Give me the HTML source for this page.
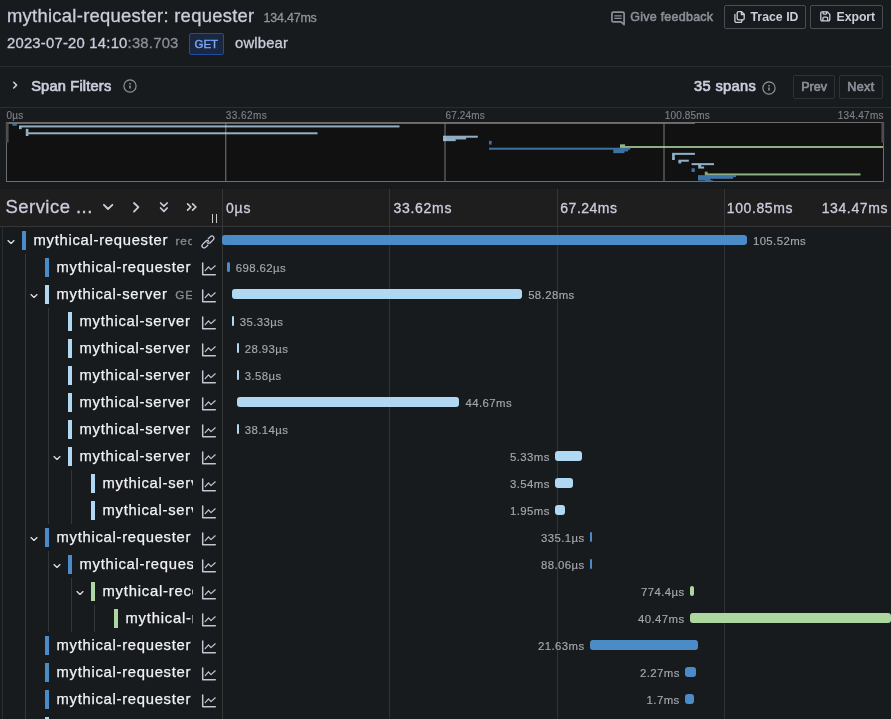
<!DOCTYPE html>
<html lang="en"><head><meta charset="utf-8"><title>mythical-requester: requester</title>
<style>
html,body{margin:0;padding:0}
body{width:891px;height:719px;overflow:hidden;position:relative;background:#181b1e;font-family:"Liberation Sans",sans-serif;color:#ccccdc}
#root{position:absolute;left:0;top:0;width:891px;height:719px;overflow:hidden;will-change:transform}
#root div,#root span,#root svg{position:absolute;white-space:pre;box-sizing:border-box}
#root span{-webkit-text-stroke:0.3px}
</style></head><body><div id="root">
<div style="left:0px;top:66px;width:891px;height:1px;background:#2a2d32"></div>
<div style="left:0px;top:107px;width:891px;height:1px;background:#2a2d32"></div>
<div style="left:189px;top:33px;width:35px;height:21.5px;background:#1a2740;border:1px solid #1f4c9c;border-radius:2px"></div>
<div style="left:724px;top:5px;width:82px;height:24px;border:1px solid #4a4c54;border-radius:2px"></div>
<div style="left:810px;top:5px;width:73px;height:24px;border:1px solid #4a4c54;border-radius:2px"></div>
<div style="left:793px;top:75px;width:42px;height:23.5px;border:1px solid #2e3136;border-radius:2px"></div>
<div style="left:839px;top:75px;width:44px;height:23.5px;border:1px solid #2e3136;border-radius:2px"></div>
<div style="left:0px;top:189px;width:891px;height:37px;background:#1e1e1f"></div>
<div style="left:0px;top:226px;width:891px;height:1px;background:#363636"></div>
<div style="left:389px;top:189px;width:1px;height:37px;background:#363636"></div>
<div style="left:389px;top:227px;width:1px;height:492px;background:#2f3133"></div>
<div style="left:557px;top:189px;width:1px;height:37px;background:#363636"></div>
<div style="left:557px;top:227px;width:1px;height:492px;background:#2f3133"></div>
<div style="left:724px;top:189px;width:1px;height:37px;background:#363636"></div>
<div style="left:724px;top:227px;width:1px;height:492px;background:#2f3133"></div>
<div style="left:222px;top:189px;width:1px;height:530px;background:#363637"></div>
<div style="left:2px;top:227px;width:1px;height:492px;background:#2a2d31"></div>
<div style="left:212px;top:214px;width:1.2px;height:9px;background:#c8c8cc"></div>
<div style="left:216px;top:214px;width:1.2px;height:9px;background:#c8c8cc"></div>
<svg style="left:611px;top:10.5px;width:14px;height:14.5px;overflow:visible" viewBox="0 0 14 14.5"><g fill="none" stroke="#8e8e98" stroke-width="1.7" stroke-linecap="round" stroke-linejoin="round" ><path d="M2.4 1.2H11.6A1.5 1.5 0 0 1 13.1 2.7V13.6L10 10.9H2.4A1.5 1.5 0 0 1 0.9 9.4V2.7A1.5 1.5 0 0 1 2.4 1.2Z"/><path d="M3.8 4.9H10.2M3.8 7.3H10.2" stroke-width="1.3"/></g></svg>
<svg style="left:733.5px;top:11px;width:11px;height:12px;overflow:visible" viewBox="0 0 11 12"><g fill="none" stroke="#ccccdc" stroke-width="1.3" stroke-linecap="round" stroke-linejoin="round" ><path d="M3.2 2.6V2A1.3 1.3 0 0 1 4.5 0.7H7.6L10.2 3.3V7.6A1.3 1.3 0 0 1 8.9 8.9H8.2"/><path d="M7.4 0.9V3.5H10"/><path d="M3.2 2.9V7.5A1.3 1.3 0 0 0 4.5 8.8H8"/><path d="M0.9 3.4V10A1.3 1.3 0 0 0 2.2 11.3H6.6A1.3 1.3 0 0 0 7.9 10V9.2" /></g></svg>
<svg style="left:819.5px;top:11.2px;width:10.6px;height:10.6px;overflow:visible" viewBox="0 0 10.6 10.6"><g fill="none" stroke="#ccccdc" stroke-width="1.3" stroke-linecap="round" stroke-linejoin="round" ><path d="M2 0.8H7.2L9.8 3.4V8.6A1.2 1.2 0 0 1 8.6 9.8H2A1.2 1.2 0 0 1 0.8 8.6V2A1.2 1.2 0 0 1 2 0.8Z"/><path d="M3.1 1V2.3A0.8 0.8 0 0 0 3.9 3.1H5.9A0.8 0.8 0 0 0 6.7 2.3V1.2"/><path d="M2.9 9.6V7.4A1.3 1.3 0 0 1 4.2 6.1H6.4A1.3 1.3 0 0 1 7.7 7.4V9.6"/></g></svg>
<svg style="left:12px;top:80px;width:6px;height:10px;overflow:visible" viewBox="0 0 6 10"><g fill="none" stroke="#ccccdc" stroke-width="1.5" stroke-linecap="round" stroke-linejoin="round" stroke-linecap="square"><path d="M1.7 2.2L4.6 5.1L1.7 8"/></g></svg>
<svg style="left:123px;top:79px;width:14px;height:14px;overflow:visible" viewBox="0 0 14 14"><g fill="none" stroke="#94949b" stroke-width="1.15" stroke-linecap="round" stroke-linejoin="round" ><circle cx="7" cy="7" r="6.1"/><path d="M7 6.6V9.6" stroke-width="1.5" stroke-linecap="butt"/><path d="M7 4.1V5.4" stroke-width="1.5" stroke-linecap="butt"/></g></svg>
<svg style="left:762px;top:80.7px;width:14px;height:14px;overflow:visible" viewBox="0 0 14 14"><g fill="none" stroke="#94949b" stroke-width="1.15" stroke-linecap="round" stroke-linejoin="round" ><circle cx="7" cy="7" r="6.1"/><path d="M7 6.6V9.6" stroke-width="1.5" stroke-linecap="butt"/><path d="M7 4.1V5.4" stroke-width="1.5" stroke-linecap="butt"/></g></svg>
<svg style="left:102px;top:202px;width:12px;height:10px;overflow:visible" viewBox="0 0 12 10"><g fill="none" stroke="#ccccdc" stroke-width="1.8" stroke-linecap="round" stroke-linejoin="round" ><path d="M1.9 2.8L6 7L10.4 2.8"/></g></svg>
<svg style="left:131px;top:201px;width:10px;height:12px;overflow:visible" viewBox="0 0 10 12"><g fill="none" stroke="#ccccdc" stroke-width="1.8" stroke-linecap="round" stroke-linejoin="round" ><path d="M3 2L7.4 6.2L3 10.6"/></g></svg>
<svg style="left:159px;top:201px;width:10px;height:12px;overflow:visible" viewBox="0 0 10 12"><g fill="none" stroke="#ccccdc" stroke-width="1.7" stroke-linecap="round" stroke-linejoin="round" ><path d="M1.6 2L4.9 5.1L8.2 2M1.6 7L4.9 10.3L8.2 7"/></g></svg>
<svg style="left:186px;top:202px;width:12px;height:10px;overflow:visible" viewBox="0 0 12 10"><g fill="none" stroke="#ccccdc" stroke-width="1.7" stroke-linecap="round" stroke-linejoin="round" ><path d="M1.6 1.9L4.8 5L1.6 8.2M6.6 1.9L9.9 5L6.6 8.2"/></g></svg>
<svg viewBox="0 0 8 8" style="left:7.199999999999999px;top:237.5px;width:8px;height:8px;overflow:visible"><path d="M1 2.6 L4 5.4 L7 2.6" fill="none" stroke="#e0e0e8" stroke-width="1.3" stroke-linecap="round" stroke-linejoin="round"/></svg>
<div style="left:22px;top:231px;width:4px;height:19px;background:#4a8bc8;"></div>
<svg viewBox="0 0 14 14" style="left:201px;top:235px;width:14px;height:14px;overflow:visible"><g fill="none" stroke="#ccccdc" stroke-width="1.3" stroke-linecap="round" transform="rotate(-45 7 7)"><path d="M4.6 9.1H1.5A2.1 2.1 0 0 1 1.5 4.9H5.9A2.1 2.1 0 0 1 8 7"/><path d="M9.4 4.9H12.5A2.1 2.1 0 0 1 12.5 9.1H8.1A2.1 2.1 0 0 1 6 7"/></g></svg>
<div style="left:222px;top:235px;width:525px;height:10px;background:#4a8bc8;border-radius:3px"></div>
<div style="left:25px;top:254px;width:1px;height:27px;background:#33363b;"></div>
<div style="left:45px;top:258px;width:4px;height:19px;background:#4a8bc8;"></div>
<svg viewBox="0 0 14 14" style="left:202px;top:262.2px;width:14px;height:14px;overflow:visible"><g fill="none" stroke="#c4c4d2" stroke-linecap="round" stroke-linejoin="round"><path d="M0.7 0.9V12.8H13.3" stroke-width="1.5"/><path d="M3.2 8.6 L6.5 4.8 L9 7.6 L13.2 3.8" stroke-width="1.2"/></g></svg>
<div style="left:227px;top:262px;width:2.5px;height:10px;background:#4a8bc8;border-radius:3px"></div>
<div style="left:25px;top:281px;width:1px;height:27px;background:#33363b;"></div>
<svg viewBox="0 0 8 8" style="left:30.2px;top:291.5px;width:8px;height:8px;overflow:visible"><path d="M1 2.6 L4 5.4 L7 2.6" fill="none" stroke="#e0e0e8" stroke-width="1.3" stroke-linecap="round" stroke-linejoin="round"/></svg>
<div style="left:45px;top:285px;width:4px;height:19px;background:#b1d8f2;"></div>
<svg viewBox="0 0 14 14" style="left:202px;top:289.2px;width:14px;height:14px;overflow:visible"><g fill="none" stroke="#c4c4d2" stroke-linecap="round" stroke-linejoin="round"><path d="M0.7 0.9V12.8H13.3" stroke-width="1.5"/><path d="M3.2 8.6 L6.5 4.8 L9 7.6 L13.2 3.8" stroke-width="1.2"/></g></svg>
<div style="left:232px;top:289px;width:290px;height:10px;background:#b1d8f2;border-radius:3px"></div>
<div style="left:25px;top:308px;width:1px;height:27px;background:#33363b;"></div>
<div style="left:48px;top:308px;width:1px;height:27px;background:#33363b;"></div>
<div style="left:68px;top:312px;width:4px;height:19px;background:#b1d8f2;"></div>
<svg viewBox="0 0 14 14" style="left:202px;top:316.2px;width:14px;height:14px;overflow:visible"><g fill="none" stroke="#c4c4d2" stroke-linecap="round" stroke-linejoin="round"><path d="M0.7 0.9V12.8H13.3" stroke-width="1.5"/><path d="M3.2 8.6 L6.5 4.8 L9 7.6 L13.2 3.8" stroke-width="1.2"/></g></svg>
<div style="left:232px;top:316px;width:1.5px;height:10px;background:#b1d8f2;border-radius:3px"></div>
<div style="left:25px;top:335px;width:1px;height:27px;background:#33363b;"></div>
<div style="left:48px;top:335px;width:1px;height:27px;background:#33363b;"></div>
<div style="left:68px;top:339px;width:4px;height:19px;background:#b1d8f2;"></div>
<svg viewBox="0 0 14 14" style="left:202px;top:343.2px;width:14px;height:14px;overflow:visible"><g fill="none" stroke="#c4c4d2" stroke-linecap="round" stroke-linejoin="round"><path d="M0.7 0.9V12.8H13.3" stroke-width="1.5"/><path d="M3.2 8.6 L6.5 4.8 L9 7.6 L13.2 3.8" stroke-width="1.2"/></g></svg>
<div style="left:237px;top:343px;width:1.5px;height:10px;background:#b1d8f2;border-radius:3px"></div>
<div style="left:25px;top:362px;width:1px;height:27px;background:#33363b;"></div>
<div style="left:48px;top:362px;width:1px;height:27px;background:#33363b;"></div>
<div style="left:68px;top:366px;width:4px;height:19px;background:#b1d8f2;"></div>
<svg viewBox="0 0 14 14" style="left:202px;top:370.2px;width:14px;height:14px;overflow:visible"><g fill="none" stroke="#c4c4d2" stroke-linecap="round" stroke-linejoin="round"><path d="M0.7 0.9V12.8H13.3" stroke-width="1.5"/><path d="M3.2 8.6 L6.5 4.8 L9 7.6 L13.2 3.8" stroke-width="1.2"/></g></svg>
<div style="left:237px;top:370px;width:1.5px;height:10px;background:#b1d8f2;border-radius:3px"></div>
<div style="left:25px;top:389px;width:1px;height:27px;background:#33363b;"></div>
<div style="left:48px;top:389px;width:1px;height:27px;background:#33363b;"></div>
<div style="left:68px;top:393px;width:4px;height:19px;background:#b1d8f2;"></div>
<svg viewBox="0 0 14 14" style="left:202px;top:397.2px;width:14px;height:14px;overflow:visible"><g fill="none" stroke="#c4c4d2" stroke-linecap="round" stroke-linejoin="round"><path d="M0.7 0.9V12.8H13.3" stroke-width="1.5"/><path d="M3.2 8.6 L6.5 4.8 L9 7.6 L13.2 3.8" stroke-width="1.2"/></g></svg>
<div style="left:237px;top:397px;width:222px;height:10px;background:#b1d8f2;border-radius:3px"></div>
<div style="left:25px;top:416px;width:1px;height:27px;background:#33363b;"></div>
<div style="left:48px;top:416px;width:1px;height:27px;background:#33363b;"></div>
<div style="left:68px;top:420px;width:4px;height:19px;background:#b1d8f2;"></div>
<svg viewBox="0 0 14 14" style="left:202px;top:424.2px;width:14px;height:14px;overflow:visible"><g fill="none" stroke="#c4c4d2" stroke-linecap="round" stroke-linejoin="round"><path d="M0.7 0.9V12.8H13.3" stroke-width="1.5"/><path d="M3.2 8.6 L6.5 4.8 L9 7.6 L13.2 3.8" stroke-width="1.2"/></g></svg>
<div style="left:237px;top:424px;width:1.5px;height:10px;background:#b1d8f2;border-radius:3px"></div>
<div style="left:25px;top:443px;width:1px;height:27px;background:#33363b;"></div>
<div style="left:48px;top:443px;width:1px;height:27px;background:#33363b;"></div>
<svg viewBox="0 0 8 8" style="left:53.2px;top:453.5px;width:8px;height:8px;overflow:visible"><path d="M1 2.6 L4 5.4 L7 2.6" fill="none" stroke="#e0e0e8" stroke-width="1.3" stroke-linecap="round" stroke-linejoin="round"/></svg>
<div style="left:68px;top:447px;width:4px;height:19px;background:#b1d8f2;"></div>
<svg viewBox="0 0 14 14" style="left:202px;top:451.2px;width:14px;height:14px;overflow:visible"><g fill="none" stroke="#c4c4d2" stroke-linecap="round" stroke-linejoin="round"><path d="M0.7 0.9V12.8H13.3" stroke-width="1.5"/><path d="M3.2 8.6 L6.5 4.8 L9 7.6 L13.2 3.8" stroke-width="1.2"/></g></svg>
<div style="left:555px;top:451px;width:27px;height:10px;background:#b1d8f2;border-radius:3px"></div>
<div style="left:25px;top:470px;width:1px;height:27px;background:#33363b;"></div>
<div style="left:48px;top:470px;width:1px;height:27px;background:#33363b;"></div>
<div style="left:71px;top:470px;width:1px;height:27px;background:#33363b;"></div>
<div style="left:91px;top:474px;width:4px;height:19px;background:#b1d8f2;"></div>
<svg viewBox="0 0 14 14" style="left:202px;top:478.2px;width:14px;height:14px;overflow:visible"><g fill="none" stroke="#c4c4d2" stroke-linecap="round" stroke-linejoin="round"><path d="M0.7 0.9V12.8H13.3" stroke-width="1.5"/><path d="M3.2 8.6 L6.5 4.8 L9 7.6 L13.2 3.8" stroke-width="1.2"/></g></svg>
<div style="left:555px;top:478px;width:18px;height:10px;background:#b1d8f2;border-radius:3px"></div>
<div style="left:25px;top:497px;width:1px;height:27px;background:#33363b;"></div>
<div style="left:48px;top:497px;width:1px;height:27px;background:#33363b;"></div>
<div style="left:71px;top:497px;width:1px;height:27px;background:#33363b;"></div>
<div style="left:91px;top:501px;width:4px;height:19px;background:#b1d8f2;"></div>
<svg viewBox="0 0 14 14" style="left:202px;top:505.2px;width:14px;height:14px;overflow:visible"><g fill="none" stroke="#c4c4d2" stroke-linecap="round" stroke-linejoin="round"><path d="M0.7 0.9V12.8H13.3" stroke-width="1.5"/><path d="M3.2 8.6 L6.5 4.8 L9 7.6 L13.2 3.8" stroke-width="1.2"/></g></svg>
<div style="left:555px;top:505px;width:10px;height:10px;background:#b1d8f2;border-radius:3px"></div>
<div style="left:25px;top:524px;width:1px;height:27px;background:#33363b;"></div>
<svg viewBox="0 0 8 8" style="left:30.2px;top:534.5px;width:8px;height:8px;overflow:visible"><path d="M1 2.6 L4 5.4 L7 2.6" fill="none" stroke="#e0e0e8" stroke-width="1.3" stroke-linecap="round" stroke-linejoin="round"/></svg>
<div style="left:45px;top:528px;width:4px;height:19px;background:#4a8bc8;"></div>
<svg viewBox="0 0 14 14" style="left:202px;top:532.2px;width:14px;height:14px;overflow:visible"><g fill="none" stroke="#c4c4d2" stroke-linecap="round" stroke-linejoin="round"><path d="M0.7 0.9V12.8H13.3" stroke-width="1.5"/><path d="M3.2 8.6 L6.5 4.8 L9 7.6 L13.2 3.8" stroke-width="1.2"/></g></svg>
<div style="left:590px;top:532px;width:2px;height:10px;background:#4a8bc8;border-radius:3px"></div>
<div style="left:25px;top:551px;width:1px;height:27px;background:#33363b;"></div>
<div style="left:48px;top:551px;width:1px;height:27px;background:#33363b;"></div>
<svg viewBox="0 0 8 8" style="left:53.2px;top:561.5px;width:8px;height:8px;overflow:visible"><path d="M1 2.6 L4 5.4 L7 2.6" fill="none" stroke="#e0e0e8" stroke-width="1.3" stroke-linecap="round" stroke-linejoin="round"/></svg>
<div style="left:68px;top:555px;width:4px;height:19px;background:#4a8bc8;"></div>
<svg viewBox="0 0 14 14" style="left:202px;top:559.2px;width:14px;height:14px;overflow:visible"><g fill="none" stroke="#c4c4d2" stroke-linecap="round" stroke-linejoin="round"><path d="M0.7 0.9V12.8H13.3" stroke-width="1.5"/><path d="M3.2 8.6 L6.5 4.8 L9 7.6 L13.2 3.8" stroke-width="1.2"/></g></svg>
<div style="left:590px;top:559px;width:2px;height:10px;background:#4a8bc8;border-radius:3px"></div>
<div style="left:25px;top:578px;width:1px;height:27px;background:#33363b;"></div>
<div style="left:48px;top:578px;width:1px;height:27px;background:#33363b;"></div>
<div style="left:71px;top:578px;width:1px;height:27px;background:#33363b;"></div>
<svg viewBox="0 0 8 8" style="left:76.2px;top:588.5px;width:8px;height:8px;overflow:visible"><path d="M1 2.6 L4 5.4 L7 2.6" fill="none" stroke="#e0e0e8" stroke-width="1.3" stroke-linecap="round" stroke-linejoin="round"/></svg>
<div style="left:91px;top:582px;width:4px;height:19px;background:#aed6a0;"></div>
<svg viewBox="0 0 14 14" style="left:202px;top:586.2px;width:14px;height:14px;overflow:visible"><g fill="none" stroke="#c4c4d2" stroke-linecap="round" stroke-linejoin="round"><path d="M0.7 0.9V12.8H13.3" stroke-width="1.5"/><path d="M3.2 8.6 L6.5 4.8 L9 7.6 L13.2 3.8" stroke-width="1.2"/></g></svg>
<div style="left:690px;top:586px;width:4px;height:10px;background:#aed6a0;border-radius:3px"></div>
<div style="left:25px;top:605px;width:1px;height:27px;background:#33363b;"></div>
<div style="left:48px;top:605px;width:1px;height:27px;background:#33363b;"></div>
<div style="left:71px;top:605px;width:1px;height:27px;background:#33363b;"></div>
<div style="left:94px;top:605px;width:1px;height:27px;background:#33363b;"></div>
<div style="left:114px;top:609px;width:4px;height:19px;background:#aed6a0;"></div>
<svg viewBox="0 0 14 14" style="left:202px;top:613.2px;width:14px;height:14px;overflow:visible"><g fill="none" stroke="#c4c4d2" stroke-linecap="round" stroke-linejoin="round"><path d="M0.7 0.9V12.8H13.3" stroke-width="1.5"/><path d="M3.2 8.6 L6.5 4.8 L9 7.6 L13.2 3.8" stroke-width="1.2"/></g></svg>
<div style="left:690px;top:613px;width:200.79999999999995px;height:10px;background:#aed6a0;border-radius:3px"></div>
<div style="left:25px;top:632px;width:1px;height:27px;background:#33363b;"></div>
<div style="left:45px;top:636px;width:4px;height:19px;background:#4a8bc8;"></div>
<svg viewBox="0 0 14 14" style="left:202px;top:640.2px;width:14px;height:14px;overflow:visible"><g fill="none" stroke="#c4c4d2" stroke-linecap="round" stroke-linejoin="round"><path d="M0.7 0.9V12.8H13.3" stroke-width="1.5"/><path d="M3.2 8.6 L6.5 4.8 L9 7.6 L13.2 3.8" stroke-width="1.2"/></g></svg>
<div style="left:590px;top:640px;width:108px;height:10px;background:#4a8bc8;border-radius:3px"></div>
<div style="left:25px;top:659px;width:1px;height:27px;background:#33363b;"></div>
<div style="left:45px;top:663px;width:4px;height:19px;background:#4a8bc8;"></div>
<svg viewBox="0 0 14 14" style="left:202px;top:667.2px;width:14px;height:14px;overflow:visible"><g fill="none" stroke="#c4c4d2" stroke-linecap="round" stroke-linejoin="round"><path d="M0.7 0.9V12.8H13.3" stroke-width="1.5"/><path d="M3.2 8.6 L6.5 4.8 L9 7.6 L13.2 3.8" stroke-width="1.2"/></g></svg>
<div style="left:685px;top:667px;width:11px;height:10px;background:#4a8bc8;border-radius:3px"></div>
<div style="left:25px;top:686px;width:1px;height:27px;background:#33363b;"></div>
<div style="left:45px;top:690px;width:4px;height:19px;background:#4a8bc8;"></div>
<svg viewBox="0 0 14 14" style="left:202px;top:694.2px;width:14px;height:14px;overflow:visible"><g fill="none" stroke="#c4c4d2" stroke-linecap="round" stroke-linejoin="round"><path d="M0.7 0.9V12.8H13.3" stroke-width="1.5"/><path d="M3.2 8.6 L6.5 4.8 L9 7.6 L13.2 3.8" stroke-width="1.2"/></g></svg>
<div style="left:685px;top:694px;width:9px;height:10px;background:#4a8bc8;border-radius:3px"></div>
<div style="left:25px;top:713px;width:1px;height:27px;background:#33363b;"></div>
<div style="left:45px;top:717px;width:4px;height:19px;background:#b1d8f2;"></div>
<svg viewBox="0 0 14 14" style="left:202px;top:721.2px;width:14px;height:14px;overflow:visible"><g fill="none" stroke="#c4c4d2" stroke-linecap="round" stroke-linejoin="round"><path d="M0.7 0.9V12.8H13.3" stroke-width="1.5"/><path d="M3.2 8.6 L6.5 4.8 L9 7.6 L13.2 3.8" stroke-width="1.2"/></g></svg>
<svg style="left:6px;top:122px;width:878px;height:60px;overflow:visible" viewBox="0 0 878 60"><rect x="0.0" y="0.00" width="878.0" height="60.00" fill="#111112"/><rect x="219.0" y="0.00" width="1.4" height="60.00" fill="#5c5c5c"/><rect x="438.3" y="0.00" width="1.4" height="60.00" fill="#5c5c5c"/><rect x="657.3" y="0.00" width="1.4" height="60.00" fill="#5c5c5c"/><rect x="0.0" y="0.00" width="689.0" height="2.00" fill="#4a8bc8" fill-opacity="0.8"/><rect x="6.3" y="1.71" width="4.6" height="2.00" fill="#4a8bc8" fill-opacity="0.8"/><rect x="13.0" y="3.43" width="380.5" height="2.00" fill="#b1d8f2" fill-opacity="0.8"/><rect x="13.0" y="5.14" width="2.6" height="2.00" fill="#b1d8f2" fill-opacity="0.8"/><rect x="19.8" y="6.86" width="2.6" height="2.00" fill="#b1d8f2" fill-opacity="0.8"/><rect x="19.8" y="8.57" width="2.6" height="2.00" fill="#b1d8f2" fill-opacity="0.8"/><rect x="19.8" y="10.29" width="291.7" height="2.00" fill="#b1d8f2" fill-opacity="0.8"/><rect x="19.8" y="12.00" width="2.6" height="2.00" fill="#b1d8f2" fill-opacity="0.8"/><rect x="437.0" y="13.71" width="34.8" height="2.00" fill="#b1d8f2" fill-opacity="0.8"/><rect x="437.0" y="15.43" width="23.1" height="2.00" fill="#b1d8f2" fill-opacity="0.8"/><rect x="437.0" y="17.14" width="12.7" height="2.00" fill="#b1d8f2" fill-opacity="0.8"/><rect x="483.0" y="18.86" width="2.6" height="2.00" fill="#4a8bc8" fill-opacity="0.8"/><rect x="483.0" y="20.57" width="2.6" height="2.00" fill="#4a8bc8" fill-opacity="0.8"/><rect x="614.0" y="22.29" width="5.1" height="2.00" fill="#aed6a0" fill-opacity="0.8"/><rect x="614.0" y="24.00" width="264.0" height="2.00" fill="#aed6a0" fill-opacity="0.8"/><rect x="483.0" y="25.71" width="141.2" height="2.00" fill="#4a8bc8" fill-opacity="0.8"/><rect x="607.3" y="27.43" width="14.8" height="2.00" fill="#4a8bc8" fill-opacity="0.8"/><rect x="607.3" y="29.14" width="11.1" height="2.00" fill="#4a8bc8" fill-opacity="0.8"/><rect x="666.1" y="30.86" width="22.8" height="2.00" fill="#b1d8f2" fill-opacity="0.8"/><rect x="666.1" y="32.57" width="2.7" height="2.00" fill="#b1d8f2" fill-opacity="0.8"/><rect x="666.1" y="34.29" width="2.7" height="2.00" fill="#b1d8f2" fill-opacity="0.8"/><rect x="666.1" y="36.00" width="2.7" height="2.00" fill="#b1d8f2" fill-opacity="0.8"/><rect x="672.4" y="37.71" width="10.4" height="2.00" fill="#b1d8f2" fill-opacity="0.8"/><rect x="672.4" y="39.43" width="2.8" height="2.00" fill="#b1d8f2" fill-opacity="0.8"/><rect x="685.6" y="41.14" width="22.4" height="2.00" fill="#b1d8f2" fill-opacity="0.8"/><rect x="692.2" y="42.86" width="3.0" height="2.00" fill="#b1d8f2" fill-opacity="0.8"/><rect x="692.2" y="44.57" width="5.9" height="2.00" fill="#b1d8f2" fill-opacity="0.8"/><rect x="685.6" y="46.29" width="3.2" height="2.00" fill="#4a8bc8" fill-opacity="0.8"/><rect x="685.6" y="48.00" width="3.2" height="2.00" fill="#4a8bc8" fill-opacity="0.8"/><rect x="698.8" y="49.71" width="2.8" height="2.00" fill="#aed6a0" fill-opacity="0.8"/><rect x="698.8" y="51.43" width="155.7" height="2.00" fill="#aed6a0" fill-opacity="0.8"/><rect x="692.0" y="53.14" width="38.0" height="2.00" fill="#4a8bc8" fill-opacity="0.8"/><rect x="692.0" y="54.86" width="35.1" height="2.00" fill="#4a8bc8" fill-opacity="0.8"/><rect x="692.0" y="56.57" width="12.5" height="2.00" fill="#4a8bc8" fill-opacity="0.8"/><rect x="698.8" y="58.29" width="8.0" height="0.71" fill="#4a8bc8" fill-opacity="0.8"/><rect x="0.5" y="0.5" width="877" height="59" fill="none" stroke="#6e6e6e" stroke-width="1"/><rect x="-0.2" y="0.40" width="2.8" height="20.30" fill="#4e4e4e"/><rect x="875.4" y="0.40" width="2.8" height="20.30" fill="#4e4e4e"/></svg>
<span style="left:7.00px;top:7px;font-size:18.4px;line-height:18.4px;height:18.4px;color:#ccccdc;letter-spacing:0.286px;">mythical-requester: requester</span>
<span style="left:263.60px;top:12px;font-size:12.5px;line-height:12.5px;height:12.5px;color:#939399;letter-spacing:-0.234px;">134.47ms</span>
<span style="left:6.96px;top:36px;font-size:14.8px;line-height:14.8px;height:14.8px;color:#ccccdc;letter-spacing:0.236px;">2023-07-20 14:10<span style="position:static;color:#8e8e98">:38.703</span></span>
<span style="left:235.09px;top:36px;font-size:14.8px;line-height:14.8px;height:14.8px;color:#ccccdc;letter-spacing:0.168px;">owlbear</span>
<span style="left:194.51px;top:39px;font-size:11.5px;line-height:11.5px;height:11.5px;color:#7ba7fa;letter-spacing:-0.006px;-webkit-text-stroke:0.4px;">GET</span>
<span style="left:630.28px;top:11px;font-size:12.5px;line-height:12.5px;height:12.5px;color:#8e8e98;letter-spacing:0.243px;-webkit-text-stroke:0.55px;">Give feedback</span>
<span style="left:750.50px;top:11px;font-size:12.3px;line-height:12.3px;height:12.3px;color:#ccccdc;letter-spacing:0.014px;font-weight:700;-webkit-text-stroke:0px;">Trace ID</span>
<span style="left:836.50px;top:11px;font-size:12.3px;line-height:12.3px;height:12.3px;color:#ccccdc;letter-spacing:-0.055px;font-weight:700;-webkit-text-stroke:0px;">Export</span>
<span style="left:31.14px;top:79px;font-size:14.6px;line-height:14.6px;height:14.6px;color:#ccccdc;letter-spacing:0.201px;-webkit-text-stroke:0.7px;">Span Filters</span>
<span style="left:694.00px;top:79px;font-size:14.6px;line-height:14.6px;height:14.6px;color:#ccccdc;letter-spacing:0.371px;-webkit-text-stroke:0.7px;">35 spans</span>
<span style="left:801.17px;top:81px;font-size:12.6px;line-height:12.6px;height:12.6px;color:#8e8e98;letter-spacing:-0.023px;-webkit-text-stroke:0.65px;">Prev</span>
<span style="left:847.37px;top:81px;font-size:12.6px;line-height:12.6px;height:12.6px;color:#8e8e98;letter-spacing:0.323px;-webkit-text-stroke:0.65px;">Next</span>
<span style="left:6.41px;top:111px;font-size:10.0px;line-height:10.0px;height:10.0px;color:#7f7f86;letter-spacing:0.296px;-webkit-text-stroke:0.15px;">0µs</span>
<span style="left:225.86px;top:111px;font-size:10.0px;line-height:10.0px;height:10.0px;color:#7f7f86;letter-spacing:0.440px;-webkit-text-stroke:0.15px;">33.62ms</span>
<span style="left:445.49px;top:111px;font-size:10.0px;line-height:10.0px;height:10.0px;color:#7f7f86;letter-spacing:0.152px;-webkit-text-stroke:0.15px;">67.24ms</span>
<span style="left:664.74px;top:111px;font-size:10.0px;line-height:10.0px;height:10.0px;color:#7f7f86;letter-spacing:0.165px;-webkit-text-stroke:0.15px;">100.85ms</span>
<span style="left:837.74px;top:111px;font-size:10.0px;line-height:10.0px;height:10.0px;color:#7f7f86;letter-spacing:0.265px;-webkit-text-stroke:0.15px;">134.47ms</span>
<span style="left:5.50px;top:198px;font-size:18.5px;line-height:18.5px;height:18.5px;color:#ccccdc;letter-spacing:0.456px;">Service ...</span>
<span style="left:225.96px;top:201px;font-size:14px;line-height:14px;height:14px;color:#ccccdc;letter-spacing:0.838px;">0µs</span>
<span style="left:393.42px;top:201px;font-size:14px;line-height:14px;height:14px;color:#ccccdc;letter-spacing:0.719px;">33.62ms</span>
<span style="left:560.32px;top:201px;font-size:14px;line-height:14px;height:14px;color:#ccccdc;letter-spacing:0.501px;">67.24ms</span>
<span style="left:726.76px;top:201px;font-size:14px;line-height:14px;height:14px;color:#ccccdc;letter-spacing:0.606px;">100.85ms</span>
<span style="left:821.66px;top:201px;font-size:14px;line-height:14px;height:14px;color:#ccccdc;letter-spacing:0.620px;">134.47ms</span>
<span style="left:33.49px;top:233px;font-size:14.8px;line-height:14.8px;height:14.8px;color:#f2f2f6;letter-spacing:0.718px;-webkit-text-stroke:0.25px;">mythical-requester</span>
<span style="left:175.50px;top:236px;font-size:11.8px;line-height:11.8px;height:11.8px;color:#8b8b90;letter-spacing:0.850px;width:16.8px;overflow:hidden;height:15.3px;">requester</span>
<span style="left:752.92px;top:236px;font-size:11.4px;line-height:11.4px;height:11.4px;color:#a6a6ad;letter-spacing:0.399px;-webkit-text-stroke:0.15px;">105.52ms</span>
<span style="left:56.49px;top:260px;font-size:14.8px;line-height:14.8px;height:14.8px;color:#f2f2f6;letter-spacing:0.718px;-webkit-text-stroke:0.25px;width:137.0px;overflow:hidden;height:19.2px;">mythical-requester</span>
<span style="left:235.73px;top:263px;font-size:11.4px;line-height:11.4px;height:11.4px;color:#a6a6ad;letter-spacing:0.399px;-webkit-text-stroke:0.15px;">698.62µs</span>
<span style="left:56.49px;top:287px;font-size:14.8px;line-height:14.8px;height:14.8px;color:#f2f2f6;letter-spacing:0.726px;-webkit-text-stroke:0.25px;">mythical-server</span>
<span style="left:175.32px;top:290px;font-size:11.8px;line-height:11.8px;height:11.8px;color:#8b8b90;letter-spacing:0.850px;width:17.0px;overflow:hidden;height:15.3px;">GET /owlbear</span>
<span style="left:528.15px;top:290px;font-size:11.4px;line-height:11.4px;height:11.4px;color:#a6a6ad;letter-spacing:0.399px;-webkit-text-stroke:0.15px;">58.28ms</span>
<span style="left:79.49px;top:314px;font-size:14.8px;line-height:14.8px;height:14.8px;color:#f2f2f6;letter-spacing:0.726px;-webkit-text-stroke:0.25px;width:114.0px;overflow:hidden;height:19.2px;">mythical-server</span>
<span style="left:239.68px;top:317px;font-size:11.4px;line-height:11.4px;height:11.4px;color:#a6a6ad;letter-spacing:0.399px;-webkit-text-stroke:0.15px;">35.33µs</span>
<span style="left:79.49px;top:341px;font-size:14.8px;line-height:14.8px;height:14.8px;color:#f2f2f6;letter-spacing:0.726px;-webkit-text-stroke:0.25px;width:114.0px;overflow:hidden;height:19.2px;">mythical-server</span>
<span style="left:244.74px;top:344px;font-size:11.4px;line-height:11.4px;height:11.4px;color:#a6a6ad;letter-spacing:0.399px;-webkit-text-stroke:0.15px;">28.93µs</span>
<span style="left:79.49px;top:368px;font-size:14.8px;line-height:14.8px;height:14.8px;color:#f2f2f6;letter-spacing:0.726px;-webkit-text-stroke:0.25px;width:114.0px;overflow:hidden;height:19.2px;">mythical-server</span>
<span style="left:244.68px;top:371px;font-size:11.4px;line-height:11.4px;height:11.4px;color:#a6a6ad;letter-spacing:0.399px;-webkit-text-stroke:0.15px;">3.58µs</span>
<span style="left:79.49px;top:395px;font-size:14.8px;line-height:14.8px;height:14.8px;color:#f2f2f6;letter-spacing:0.726px;-webkit-text-stroke:0.25px;width:114.0px;overflow:hidden;height:19.2px;">mythical-server</span>
<span style="left:465.50px;top:398px;font-size:11.4px;line-height:11.4px;height:11.4px;color:#a6a6ad;letter-spacing:0.399px;-webkit-text-stroke:0.15px;">44.67ms</span>
<span style="left:79.49px;top:422px;font-size:14.8px;line-height:14.8px;height:14.8px;color:#f2f2f6;letter-spacing:0.726px;-webkit-text-stroke:0.25px;width:114.0px;overflow:hidden;height:19.2px;">mythical-server</span>
<span style="left:244.68px;top:425px;font-size:11.4px;line-height:11.4px;height:11.4px;color:#a6a6ad;letter-spacing:0.399px;-webkit-text-stroke:0.15px;">38.14µs</span>
<span style="left:79.49px;top:449px;font-size:14.8px;line-height:14.8px;height:14.8px;color:#f2f2f6;letter-spacing:0.726px;-webkit-text-stroke:0.25px;width:114.0px;overflow:hidden;height:19.2px;">mythical-server</span>
<span style="left:510.00px;top:452px;font-size:11.4px;line-height:11.4px;height:11.4px;color:#a6a6ad;letter-spacing:0.399px;-webkit-text-stroke:0.15px;">5.33ms</span>
<span style="left:102.49px;top:476px;font-size:14.8px;line-height:14.8px;height:14.8px;color:#f2f2f6;letter-spacing:0.726px;-webkit-text-stroke:0.25px;width:91.0px;overflow:hidden;height:19.2px;">mythical-server</span>
<span style="left:510.00px;top:479px;font-size:11.4px;line-height:11.4px;height:11.4px;color:#a6a6ad;letter-spacing:0.399px;-webkit-text-stroke:0.15px;">3.54ms</span>
<span style="left:102.49px;top:503px;font-size:14.8px;line-height:14.8px;height:14.8px;color:#f2f2f6;letter-spacing:0.726px;-webkit-text-stroke:0.25px;width:91.0px;overflow:hidden;height:19.2px;">mythical-server</span>
<span style="left:510.00px;top:506px;font-size:11.4px;line-height:11.4px;height:11.4px;color:#a6a6ad;letter-spacing:0.399px;-webkit-text-stroke:0.15px;">1.95ms</span>
<span style="left:56.49px;top:530px;font-size:14.8px;line-height:14.8px;height:14.8px;color:#f2f2f6;letter-spacing:0.718px;-webkit-text-stroke:0.25px;width:137.0px;overflow:hidden;height:19.2px;">mythical-requester</span>
<span style="left:541.08px;top:533px;font-size:11.4px;line-height:11.4px;height:11.4px;color:#a6a6ad;letter-spacing:0.399px;-webkit-text-stroke:0.15px;">335.1µs</span>
<span style="left:79.49px;top:557px;font-size:14.8px;line-height:14.8px;height:14.8px;color:#f2f2f6;letter-spacing:0.718px;-webkit-text-stroke:0.25px;width:114.0px;overflow:hidden;height:19.2px;">mythical-requester</span>
<span style="left:541.08px;top:560px;font-size:11.4px;line-height:11.4px;height:11.4px;color:#a6a6ad;letter-spacing:0.399px;-webkit-text-stroke:0.15px;">88.06µs</span>
<span style="left:102.49px;top:584px;font-size:14.8px;line-height:14.8px;height:14.8px;color:#f2f2f6;letter-spacing:0.788px;-webkit-text-stroke:0.25px;width:91.0px;overflow:hidden;height:19.2px;">mythical-recorder</span>
<span style="left:641.08px;top:587px;font-size:11.4px;line-height:11.4px;height:11.4px;color:#a6a6ad;letter-spacing:0.399px;-webkit-text-stroke:0.15px;">774.4µs</span>
<span style="left:125.49px;top:611px;font-size:14.8px;line-height:14.8px;height:14.8px;color:#f2f2f6;letter-spacing:0.788px;-webkit-text-stroke:0.25px;width:68.0px;overflow:hidden;height:19.2px;">mythical-recorder</span>
<span style="left:638.08px;top:614px;font-size:11.4px;line-height:11.4px;height:11.4px;color:#a6a6ad;letter-spacing:0.399px;-webkit-text-stroke:0.15px;">40.47ms</span>
<span style="left:56.49px;top:638px;font-size:14.8px;line-height:14.8px;height:14.8px;color:#f2f2f6;letter-spacing:0.718px;-webkit-text-stroke:0.25px;width:137.0px;overflow:hidden;height:19.2px;">mythical-requester</span>
<span style="left:538.08px;top:641px;font-size:11.4px;line-height:11.4px;height:11.4px;color:#a6a6ad;letter-spacing:0.399px;-webkit-text-stroke:0.15px;">21.63ms</span>
<span style="left:56.49px;top:665px;font-size:14.8px;line-height:14.8px;height:14.8px;color:#f2f2f6;letter-spacing:0.718px;-webkit-text-stroke:0.25px;width:137.0px;overflow:hidden;height:19.2px;">mythical-requester</span>
<span style="left:640.00px;top:668px;font-size:11.4px;line-height:11.4px;height:11.4px;color:#a6a6ad;letter-spacing:0.399px;-webkit-text-stroke:0.15px;">2.27ms</span>
<span style="left:56.49px;top:692px;font-size:14.8px;line-height:14.8px;height:14.8px;color:#f2f2f6;letter-spacing:0.718px;-webkit-text-stroke:0.25px;width:137.0px;overflow:hidden;height:19.2px;">mythical-requester</span>
<span style="left:646.61px;top:695px;font-size:11.4px;line-height:11.4px;height:11.4px;color:#a6a6ad;letter-spacing:0.399px;-webkit-text-stroke:0.15px;">1.7ms</span>
<span style="left:56.49px;top:719px;font-size:14.8px;line-height:14.8px;height:14.8px;color:#f2f2f6;letter-spacing:0.726px;-webkit-text-stroke:0.25px;width:137.0px;overflow:hidden;height:19.2px;">mythical-server</span>
</div></body></html>
